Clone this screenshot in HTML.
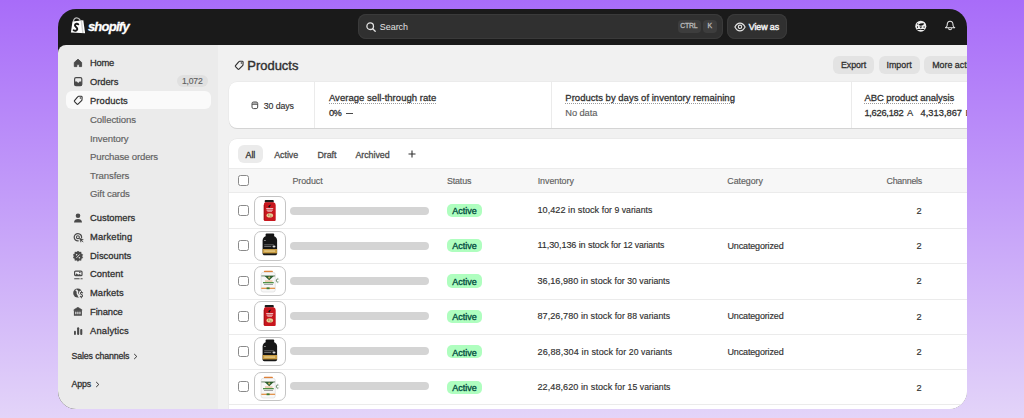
<!DOCTYPE html>
<html><head><meta charset="utf-8"><style>
html,body{margin:0;padding:0;}
body{width:1024px;height:418px;overflow:hidden;position:relative;background:linear-gradient(180deg,#a86cf9 0%,#c49ff9 50%,#e3d4f9 100%);font-family:"Liberation Sans", sans-serif;}
#frame{position:absolute;left:58px;top:9px;width:909px;height:400px;overflow:hidden;border-radius:18px;background:#1a1a1a;}
.t{position:absolute;white-space:nowrap;line-height:1;}
.b{position:absolute;}
</style></head><body><div id="frame">
<svg class="b" style="left:10.00px;top:6.00px;" width="22" height="22" viewBox="0 0 22 22">
<path d="M5.3 6.6 C5.8 3.8 7.6 2.6 9 2.9 C10.6 3.2 11.8 4.4 12.4 5.6" stroke="#b8b8b8" stroke-width="1.3" fill="none"/>
<path d="M4.5 6.6 L15.3 5.3 L17.1 18.2 L2.9 17.6 Z" fill="#fff"/>
<path d="M12.6 5.6 L14 5.45 L15.6 18.1 L14.2 18.05 Z" fill="#d0d0d0"/>
<path d="M10.3 9.3 C9.6 8.6 7.2 8.4 6.9 10.2 C6.6 11.9 9.6 12.2 9.3 14.2 C9 16 6.8 16.1 5.6 15.3" stroke="#1a1a1a" stroke-width="1.9" fill="none" stroke-linecap="round"/>
</svg>
<div class="t" style="left:29.90px;top:11.00px;font-size:13px;font-weight:700;color:#fff;font-style:italic;letter-spacing:-0.75px;-webkit-text-stroke:0.3px #fff;">shopify</div>
<div class="b" style="left:300.00px;top:5.00px;width:365.00px;height:24.50px;background:#303030;border-radius:8px;box-shadow:inset 0 0 0 1px #3a3a3a;"></div>
<svg class="b" style="left:308.00px;top:13.00px;" width="10" height="10" viewBox="0 0 10 10"><circle cx="4.2" cy="4.2" r="3.3" stroke="#e3e3e3" stroke-width="1.3" fill="none"/><path d="M6.7 6.7 L9.2 9.2" stroke="#e3e3e3" stroke-width="1.3" stroke-linecap="round"/></svg>
<div class="t" style="left:321.70px;top:13.62px;font-size:8.96px;font-weight:400;color:#e3e3e3;letter-spacing:0.004px;">Search</div>
<div class="b" style="left:620.00px;top:10.80px;width:23.00px;height:13.00px;background:#3d3d3d;border-radius:4px;"></div>
<div class="t" style="left:622.30px;top:13.56px;font-size:6.9px;font-weight:400;color:#bdbdbd;-webkit-text-stroke:0.28px #bdbdbd;letter-spacing:-0.200px;">CTRL</div>
<div class="b" style="left:645.40px;top:10.80px;width:13.20px;height:13.00px;background:#3d3d3d;border-radius:4px;"></div>
<div class="t" style="left:649.60px;top:13.56px;font-size:6.9px;font-weight:400;color:#bdbdbd;-webkit-text-stroke:0.28px #bdbdbd;">K</div>
<div class="b" style="left:669.20px;top:5.00px;width:59.70px;height:24.50px;background:#303030;border-radius:8px;box-shadow:inset 0 0 0 1px #3a3a3a;"></div>
<svg class="b" style="left:675.60px;top:13.00px;" width="12" height="10" viewBox="0 0 12 10"><path d="M0.9 5 C2.3 2.3 3.9 1.1 6 1.1 C8.1 1.1 9.7 2.3 11.1 5 C9.7 7.7 8.1 8.9 6 8.9 C3.9 8.9 2.3 7.7 0.9 5 Z" stroke="#e3e3e3" stroke-width="1.15" fill="none" stroke-linejoin="round"/><circle cx="6" cy="4.8" r="1.7" stroke="#e3e3e3" stroke-width="1.1" fill="none"/></svg>
<div class="t" style="left:690.75px;top:13.67px;font-size:8.9px;font-weight:400;color:#f0f0f0;-webkit-text-stroke:0.28px #f0f0f0;-webkit-text-stroke:0.45px #f0f0f0;letter-spacing:-0.089px;">View as</div>
<svg class="b" style="left:854.00px;top:9.00px;" width="18" height="18" viewBox="0 0 18 18">
<circle cx="8.8" cy="8.2" r="5.5" fill="#ededed"/>
<path d="M6.4 6.6 Q8.8 5 12.2 5.4 Q11.8 7.3 9 7.7 Q7.2 7.8 6.4 6.6 Z" fill="#111"/>
<circle cx="5.6" cy="5.9" r="0.65" fill="#222"/>
<rect x="5" y="8.3" width="1" height="1.5" fill="#222"/>
<path d="M7.4 8.6 L10.2 8.6 L8.8 10.4 Z" fill="#222"/>
<rect x="11.6" y="8.3" width="1" height="1.5" fill="#222"/>
<path d="M5.2 10.9 L8.1 10.9 L8.8 11.6 L9.5 10.9 L12.4 10.9 L12.2 12 L5.4 12 Z" fill="#1a1a1a"/>
</svg>
<svg class="b" style="left:886.00px;top:11.00px;" width="12" height="12" viewBox="0 0 12 12">
<path d="M6.1 1.3 C4.3 1.3 3.3 2.7 3.2 4.6 L3.1 5.8 C3 6.6 2.5 7 1.5 7.7 L10.7 7.7 C9.7 7 9.2 6.6 9.1 5.8 L9 4.6 C8.9 2.7 7.9 1.3 6.1 1.3 Z" stroke="#e8e8e8" stroke-width="1.05" fill="none" stroke-linejoin="round"/>
<path d="M4.5 8.3 C4.7 10.3 7.5 10.3 7.7 8.3" stroke="#e8e8e8" stroke-width="1.05" fill="none"/>
</svg>
<div class="b" style="left:0.00px;top:36.00px;width:160.00px;height:364.00px;background:#ebebeb;border-top-left-radius:8px;"></div>
<div class="b" style="left:160.00px;top:36.00px;width:749.00px;height:364.00px;background:#f1f1f1;"></div>
<div class="b" style="left:8.00px;top:81.60px;width:144.80px;height:18.40px;background:#fafafa;border-radius:6px;"></div>
<div class="b" style="left:119.00px;top:65.50px;width:30.70px;height:12.80px;background:#e0e0e0;border-radius:7px;"></div>
<div class="t" style="left:123.90px;top:68.42px;font-size:8.6px;font-weight:400;color:#616161;-webkit-text-stroke:0.15px #616161;letter-spacing:-0.163px;">1,072</div>
<div class="t" style="left:32.00px;top:49.24px;font-size:9.4px;font-weight:400;color:#303030;-webkit-text-stroke:0.28px #303030;letter-spacing:-0.254px;">Home</div>
<div class="t" style="left:32.00px;top:67.94px;font-size:9.4px;font-weight:400;color:#303030;-webkit-text-stroke:0.28px #303030;letter-spacing:-0.059px;">Orders</div>
<div class="t" style="left:32.00px;top:86.74px;font-size:9.4px;font-weight:400;color:#303030;-webkit-text-stroke:0.28px #303030;letter-spacing:0.112px;">Products</div>
<div class="t" style="left:32.00px;top:105.67px;font-size:9.6px;font-weight:400;color:#616161;-webkit-text-stroke:0.15px #616161;letter-spacing:-0.094px;">Collections</div>
<div class="t" style="left:32.00px;top:124.57px;font-size:9.6px;font-weight:400;color:#616161;-webkit-text-stroke:0.15px #616161;letter-spacing:-0.108px;">Inventory</div>
<div class="t" style="left:32.00px;top:143.27px;font-size:9.6px;font-weight:400;color:#616161;-webkit-text-stroke:0.15px #616161;letter-spacing:-0.159px;">Purchase orders</div>
<div class="t" style="left:32.00px;top:161.87px;font-size:9.6px;font-weight:400;color:#616161;-webkit-text-stroke:0.15px #616161;letter-spacing:-0.108px;">Transfers</div>
<div class="t" style="left:32.00px;top:180.47px;font-size:9.6px;font-weight:400;color:#616161;-webkit-text-stroke:0.15px #616161;letter-spacing:-0.126px;">Gift cards</div>
<div class="t" style="left:32.00px;top:204.24px;font-size:9.4px;font-weight:400;color:#303030;-webkit-text-stroke:0.28px #303030;letter-spacing:-0.014px;">Customers</div>
<div class="t" style="left:32.00px;top:222.94px;font-size:9.4px;font-weight:400;color:#303030;-webkit-text-stroke:0.28px #303030;letter-spacing:0.125px;">Marketing</div>
<div class="t" style="left:32.00px;top:241.84px;font-size:9.4px;font-weight:400;color:#303030;-webkit-text-stroke:0.28px #303030;letter-spacing:0.014px;">Discounts</div>
<div class="t" style="left:32.00px;top:260.24px;font-size:9.4px;font-weight:400;color:#303030;-webkit-text-stroke:0.28px #303030;letter-spacing:0.037px;">Content</div>
<div class="t" style="left:32.00px;top:279.24px;font-size:9.4px;font-weight:400;color:#303030;-webkit-text-stroke:0.28px #303030;letter-spacing:0.051px;">Markets</div>
<div class="t" style="left:32.00px;top:297.94px;font-size:9.4px;font-weight:400;color:#303030;-webkit-text-stroke:0.28px #303030;letter-spacing:-0.094px;">Finance</div>
<div class="t" style="left:32.00px;top:316.84px;font-size:9.4px;font-weight:400;color:#303030;-webkit-text-stroke:0.28px #303030;letter-spacing:0.154px;">Analytics</div>
<div class="t" style="left:13.50px;top:343.05px;font-size:8.8px;font-weight:400;color:#303030;-webkit-text-stroke:0.28px #303030;letter-spacing:-0.134px;">Sales channels</div>
<div class="t" style="left:13.50px;top:371.45px;font-size:8.8px;font-weight:400;color:#303030;-webkit-text-stroke:0.28px #303030;letter-spacing:-0.141px;">Apps</div>
<svg class="b" style="left:74.50px;top:343.50px;" width="5" height="7" viewBox="0 0 5 7"><path d="M1.2 1 L3.8 3.5 L1.2 6" stroke="#303030" stroke-width="1" fill="none"/></svg>
<svg class="b" style="left:36.50px;top:371.80px;" width="5" height="7" viewBox="0 0 5 7"><path d="M1.2 1 L3.8 3.5 L1.2 6" stroke="#303030" stroke-width="1" fill="none"/></svg>
<svg class="b" style="left:15.00px;top:48.50px;" width="11" height="11" viewBox="0 0 11 11"><path d="M5 1.2 L8.6 4.4 L8.6 8.6 L6.3 8.6 L6.3 6.3 L3.9 6.3 L3.9 8.6 L1.3 8.6 L1.3 4.4 Z" fill="#4a4a4a" stroke="#4a4a4a" stroke-width="0.9" stroke-linejoin="round"/></svg>
<svg class="b" style="left:15.00px;top:67.00px;" width="11" height="11" viewBox="0 0 11 11"><rect x="1.6" y="1.6" width="7.2" height="8" rx="1.4" fill="none" stroke="#4a4a4a" stroke-width="1.2"/><path d="M1.6 5.6 L3.9 5.6 L5.2 7 L6.6 5.6 L8.8 5.6 L8.8 8.4 Q8.8 9.6 7.6 9.6 L2.8 9.6 Q1.6 9.6 1.6 8.4 Z" fill="#4a4a4a"/></svg>
<svg class="b" style="left:15.00px;top:85.80px;" width="11" height="11" viewBox="0 0 11 11"><path d="M1.5 5.6 L4.9 1.6 Q5.2 1.2 5.7 1.2 L8.4 1.3 Q9.1 1.4 9.1 2.1 L9 4.8 Q9 5.3 8.6 5.6 L5 9.2 Q4.5 9.7 4 9.2 L1.5 6.6 Q1.1 6.1 1.5 5.6 Z" fill="none" stroke="#303030" stroke-width="1.1" stroke-linejoin="round"/><circle cx="7.4" cy="3.1" r="0.75" fill="#303030"/></svg>
<svg class="b" style="left:15.00px;top:204.00px;" width="11" height="11" viewBox="0 0 11 11"><circle cx="5" cy="2.8" r="2.3" fill="#4a4a4a"/><path d="M1 9.6 C1 7 2.8 6 5 6 C7.2 6 9 7 9 9.6 Z" fill="#4a4a4a"/></svg>
<svg class="b" style="left:15.00px;top:223.00px;" width="11" height="11" viewBox="0 0 11 11"><path d="M8.59 5.52 A3.7 3.7 0 1 0 5.22 8.89" stroke="#4a4a4a" stroke-width="1.25" fill="none" stroke-linecap="round"/><circle cx="4.9" cy="5.2" r="1.45" stroke="#4a4a4a" stroke-width="1.15" fill="none"/><path d="M6.4 6.1 L10.4 7.6 L8.5 8.4 L7.8 10.3 Z" fill="#4a4a4a" stroke="#4a4a4a" stroke-width="0.4" stroke-linejoin="round"/><path d="M8.4 8.3 L10 9.9" stroke="#4a4a4a" stroke-width="0.9" stroke-linecap="round"/></svg>
<svg class="b" style="left:15.00px;top:241.50px;" width="11" height="11" viewBox="0 0 11 11"><path d="M5 -0.2 L6.3 1.1 L8.1 0.9 L8.3 2.7 L9.9 3.6 L9.1 5.2 L9.9 6.8 L8.3 7.7 L8.1 9.5 L6.3 9.3 L5 10.6 L3.7 9.3 L1.9 9.5 L1.7 7.7 L0.1 6.8 L0.9 5.2 L0.1 3.6 L1.7 2.7 L1.9 0.9 L3.7 1.1 Z" fill="#4a4a4a" stroke="#4a4a4a" stroke-width="0.3" stroke-linejoin="round"/><path d="M3.4 6.9 L6.6 3.5" stroke="#ebebeb" stroke-width="0.9"/><circle cx="3.6" cy="3.7" r="0.75" fill="#ebebeb"/><circle cx="6.4" cy="6.7" r="0.75" fill="#ebebeb"/></svg>
<svg class="b" style="left:15.00px;top:260.50px;" width="11" height="11" viewBox="0 0 11 11"><rect x="1.6" y="1.1" width="7.4" height="4.6" rx="1" fill="#f2f2f2" stroke="#4a4a4a" stroke-width="1.2"/><path d="M2.1 5.3 L3.6 3.3 L5.2 4.8 L6.5 3.9 L8.5 5.3 Z" fill="#4a4a4a"/><circle cx="6.8" cy="2.6" r="0.75" fill="#4a4a4a"/><rect x="1.1" y="8.3" width="5.6" height="1" rx="0.4" fill="#4a4a4a"/><rect x="7.4" y="8.3" width="2.3" height="1" rx="0.4" fill="#4a4a4a"/></svg>
<svg class="b" style="left:15.00px;top:279.00px;" width="11" height="11" viewBox="0 0 11 11"><circle cx="4.7" cy="5" r="4.5" fill="#4a4a4a"/><path d="M3.2 2.2 Q4.2 2.6 4.6 3.8 Q4.2 4.8 4.4 5.6 Q5.4 6.6 5.6 8.2" stroke="#ebebeb" stroke-width="1.5" fill="none" stroke-linecap="round"/><path d="M9.6 4.9 Q9.1 4.2 8.4 4.2 Q7.4 4.3 7.5 5.3 Q7.6 6.2 8.5 6.5 Q9.6 6.9 9.5 7.9 Q9.4 8.9 8.4 8.9 Q7.6 8.9 7.3 8.2" stroke="#ebebeb" stroke-width="3.2" fill="none" stroke-linecap="round"/><path d="M9.6 4.9 Q9.1 4.2 8.4 4.2 Q7.4 4.3 7.5 5.3 Q7.6 6.2 8.5 6.5 Q9.6 6.9 9.5 7.9 Q9.4 8.9 8.4 8.9 Q7.6 8.9 7.3 8.2 M8.5 3.5 L8.5 4.2 M8.4 8.9 L8.4 9.7" stroke="#4a4a4a" stroke-width="1.1" fill="none" stroke-linecap="round"/></svg>
<svg class="b" style="left:15.00px;top:297.80px;" width="11" height="11" viewBox="0 0 11 11"><path d="M4.9 0.3 L8.9 2.7 L8.9 3.4 L0.9 3.4 L0.9 2.7 Z" fill="#4a4a4a" stroke="#4a4a4a" stroke-width="0.6" stroke-linejoin="round"/><rect x="0.9" y="3.2" width="8" height="5.6" rx="0.3" fill="#4a4a4a"/><rect x="2.3" y="4.5" width="1.1" height="2.7" rx="0.55" fill="#f2f2f2"/><rect x="4.35" y="4.5" width="1.1" height="2.7" rx="0.55" fill="#f2f2f2"/><rect x="6.4" y="4.5" width="1.1" height="2.7" rx="0.55" fill="#f2f2f2"/></svg>
<svg class="b" style="left:15.00px;top:316.50px;" width="11" height="11" viewBox="0 0 11 11"><rect x="1" y="4.8" width="1.9" height="4.2" rx="0.9" fill="#4a4a4a"/><rect x="4.1" y="1.3" width="2.1" height="7.7" rx="1" fill="#4a4a4a"/><rect x="7.2" y="3.1" width="2.1" height="5.9" rx="1" fill="#4a4a4a"/></svg>
<svg class="b" style="left:175.50px;top:50.80px;" width="11" height="11" viewBox="0 0 11 11"><path d="M1.5 5.6 L4.9 1.6 Q5.2 1.2 5.7 1.2 L8.4 1.3 Q9.1 1.4 9.1 2.1 L9 4.8 Q9 5.3 8.6 5.6 L5 9.2 Q4.5 9.7 4 9.2 L1.5 6.6 Q1.1 6.1 1.5 5.6 Z" fill="none" stroke="#303030" stroke-width="1.15" stroke-linejoin="round"/><circle cx="7.4" cy="3.1" r="0.75" fill="#303030"/></svg>
<div class="t" style="left:189.30px;top:50.54px;font-size:12.95px;font-weight:400;color:#303030;-webkit-text-stroke:0.28px #303030;-webkit-text-stroke:0.4px #303030;letter-spacing:0.005px;">Products</div>
<div class="b" style="left:775.30px;top:47.00px;width:40.60px;height:18.20px;background:#e3e3e3;border-radius:6px;"></div>
<div class="t" style="left:783.00px;top:52.27px;font-size:8.9px;font-weight:400;color:#303030;-webkit-text-stroke:0.28px #303030;letter-spacing:-0.109px;">Export</div>
<div class="b" style="left:821.00px;top:47.00px;width:40.70px;height:18.20px;background:#e3e3e3;border-radius:6px;"></div>
<div class="t" style="left:828.40px;top:52.27px;font-size:8.9px;font-weight:400;color:#303030;-webkit-text-stroke:0.28px #303030;letter-spacing:0.057px;">Import</div>
<div class="b" style="left:866.40px;top:47.00px;width:80.00px;height:18.20px;background:#e3e3e3;border-radius:6px;"></div>
<div class="t" style="left:874.20px;top:52.27px;font-size:8.9px;font-weight:400;color:#303030;-webkit-text-stroke:0.28px #303030;">More actions</div>
<div class="b" style="left:171.00px;top:73.00px;width:760.00px;height:46.30px;background:#fff;border-radius:8px;box-shadow:0 1px 0 #d4d4d4, 0 0 0 0.5px #e6e6e6;"></div>
<div class="b" style="left:256.00px;top:73.00px;width:1.00px;height:46.30px;background:#ebebeb;"></div>
<div class="b" style="left:493.00px;top:73.00px;width:1.00px;height:46.30px;background:#ebebeb;"></div>
<div class="b" style="left:792.50px;top:73.00px;width:1.00px;height:46.30px;background:#ebebeb;"></div>
<svg class="b" style="left:193.40px;top:91.50px;" width="8" height="9" viewBox="0 0 8 9"><rect x="1.4" y="1.3" width="4.9" height="2" fill="#bdbdbd"/><rect x="1" y="1" width="5.7" height="6.6" rx="1.5" stroke="#4a4a4a" stroke-width="1" fill="none"/><path d="M1 3.3 L6.7 3.3" stroke="#4a4a4a" stroke-width="0.9"/></svg>
<div class="t" style="left:205.75px;top:92.55px;font-size:8.8px;font-weight:400;color:#303030;-webkit-text-stroke:0.15px #303030;letter-spacing:-0.116px;">30 days</div>
<div class="t" style="left:270.90px;top:84.46px;font-size:9.5px;font-weight:400;color:#303030;-webkit-text-stroke:0.28px #303030;letter-spacing:0.036px;">Average sell-through rate</div>
<div class="b" style="left:270.90px;top:94.00px;width:107.40px;height:1.00px;background-image:linear-gradient(90deg,#9a9a9a 50%,transparent 50%);background-size:2px 1px;"></div>
<div class="t" style="left:270.90px;top:99.93px;font-size:9.3px;font-weight:400;color:#303030;-webkit-text-stroke:0.28px #303030;letter-spacing:-0.669px;">0%</div>
<div class="b" style="left:288.00px;top:103.80px;width:7.00px;height:1.00px;background:#4a4a4a;"></div>
<div class="t" style="left:507.30px;top:84.46px;font-size:9.5px;font-weight:400;color:#303030;-webkit-text-stroke:0.28px #303030;letter-spacing:0.018px;">Products by days of inventory remaining</div>
<div class="b" style="left:507.30px;top:94.00px;width:169.70px;height:1.00px;background-image:linear-gradient(90deg,#9a9a9a 50%,transparent 50%);background-size:2px 1px;"></div>
<div class="t" style="left:507.30px;top:100.43px;font-size:9.3px;font-weight:400;color:#616161;-webkit-text-stroke:0.15px #616161;letter-spacing:-0.080px;">No data</div>
<div class="t" style="left:806.40px;top:84.46px;font-size:9.5px;font-weight:400;color:#303030;-webkit-text-stroke:0.28px #303030;letter-spacing:-0.051px;">ABC product analysis</div>
<div class="b" style="left:806.40px;top:94.00px;width:89.80px;height:1.00px;background-image:linear-gradient(90deg,#9a9a9a 50%,transparent 50%);background-size:2px 1px;"></div>
<div class="t" style="left:806.40px;top:99.83px;font-size:9.3px;font-weight:400;color:#303030;-webkit-text-stroke:0.28px #303030;letter-spacing:-0.262px;">1,626,182</div>
<div class="t" style="left:849.00px;top:99.83px;font-size:9.3px;font-weight:400;color:#303030;-webkit-text-stroke:0.15px #303030;">A</div>
<div class="t" style="left:862.60px;top:99.83px;font-size:9.3px;font-weight:400;color:#303030;-webkit-text-stroke:0.28px #303030;letter-spacing:0.005px;">4,313,867</div>
<div class="t" style="left:907.50px;top:99.83px;font-size:9.3px;font-weight:400;color:#303030;-webkit-text-stroke:0.15px #303030;">B</div>
<div class="b" style="left:171.30px;top:129.50px;width:760.00px;height:290.00px;background:#fff;border-radius:8px;box-shadow:0 0 0 0.5px #e3e3e3;"></div>
<div class="b" style="left:179.70px;top:135.80px;width:25.00px;height:18.00px;background:#ebebeb;border-radius:6px;"></div>
<div class="t" style="left:187.50px;top:141.97px;font-size:8.9px;font-weight:400;color:#303030;-webkit-text-stroke:0.28px #303030;letter-spacing:-0.025px;">All</div>
<div class="t" style="left:216.20px;top:141.97px;font-size:8.9px;font-weight:400;color:#4a4a4a;-webkit-text-stroke:0.28px #4a4a4a;letter-spacing:-0.029px;">Active</div>
<div class="t" style="left:259.40px;top:141.97px;font-size:8.9px;font-weight:400;color:#4a4a4a;-webkit-text-stroke:0.28px #4a4a4a;letter-spacing:-0.047px;">Draft</div>
<div class="t" style="left:297.50px;top:141.97px;font-size:8.9px;font-weight:400;color:#4a4a4a;-webkit-text-stroke:0.28px #4a4a4a;letter-spacing:-0.066px;">Archived</div>
<svg class="b" style="left:349.50px;top:141.00px;" width="8" height="8" viewBox="0 0 8 8"><path d="M4 0.5 L4 7.5 M0.5 4 L7.5 4" stroke="#303030" stroke-width="1.1"/></svg>
<div class="b" style="left:171.30px;top:158.80px;width:760.00px;height:24.80px;background:#f7f7f7;border-top:1px solid #ebebeb;border-bottom:1px solid #ebebeb;box-sizing:border-box;"></div>
<div class="b" style="left:180.20px;top:166.00px;width:10.60px;height:10.60px;border:1px solid #8a8a8a;border-radius:2.5px;box-sizing:border-box;background:#fff;"></div>
<div class="t" style="left:234.40px;top:168.07px;font-size:8.9px;font-weight:400;color:#616161;-webkit-text-stroke:0.15px #616161;letter-spacing:-0.042px;">Product</div>
<div class="t" style="left:388.90px;top:168.17px;font-size:8.9px;font-weight:400;color:#616161;-webkit-text-stroke:0.15px #616161;letter-spacing:-0.129px;">Status</div>
<div class="t" style="left:479.70px;top:168.17px;font-size:8.9px;font-weight:400;color:#616161;-webkit-text-stroke:0.15px #616161;letter-spacing:-0.046px;">Inventory</div>
<div class="t" style="left:669.30px;top:168.17px;font-size:8.9px;font-weight:400;color:#616161;-webkit-text-stroke:0.15px #616161;letter-spacing:-0.052px;">Category</div>
<div class="t" style="left:828.50px;top:168.17px;font-size:8.9px;font-weight:400;color:#616161;-webkit-text-stroke:0.15px #616161;letter-spacing:-0.250px;">Channels</div>
<div class="b" style="left:171.30px;top:219.00px;width:760.00px;height:1.00px;background:#ebebeb;"></div>
<div class="b" style="left:180.20px;top:196.20px;width:10.60px;height:10.60px;border:1px solid #8a8a8a;border-radius:2.5px;box-sizing:border-box;background:#fff;"></div>
<div class="b" style="left:196.10px;top:187.10px;width:31.80px;height:29.50px;border:1px solid #c4c4c4;border-radius:7px;box-sizing:border-box;background:#fff;"></div>
<svg class="b" style="left:196.10px;top:187.10px;" width="31.8" height="30" viewBox="0 0 31.8 30"><rect x="10.7" y="4" width="9.1" height="2.6" rx="1" fill="#1c1c1c"/><path d="M11 6.3 L19.6 6.3 Q21.7 6.8 21.7 9 L21.7 24 Q21.7 25.1 20.6 25.1 L10.9 25.1 Q9.8 25.1 9.8 24 L9.8 9 Q9.8 6.8 11 6.3 Z" fill="#c8161d"/><rect x="9.8" y="9" width="0.9" height="15" fill="#9e1015"/><path d="M14.2 10.2 Q15.6 8.6 17.4 8.6 Q16.2 9.6 15.6 11.4 Q14.8 11.6 14.2 10.2 Z" fill="#151515"/><rect x="12.2" y="12.2" width="7" height="0.9" fill="#f6dede"/><rect x="12.6" y="13.7" width="6.2" height="0.9" fill="#f6dede"/><rect x="13.4" y="15.2" width="4.6" height="0.7" fill="#eab8b8"/><ellipse cx="15.8" cy="19.4" rx="3.3" ry="2.1" fill="#e6cf94"/><circle cx="14.8" cy="19" r="0.55" fill="#5a3518"/><circle cx="16.9" cy="19.9" r="0.5" fill="#5a3518"/></svg>
<div class="b" style="left:232.20px;top:197.90px;width:138.80px;height:8.10px;background:#d4d4d4;border-radius:4.05px;"></div>
<div class="b" style="left:388.90px;top:194.70px;width:34.70px;height:13.10px;background:#affebf;border-radius:5px;"></div>
<div class="t" style="left:394.30px;top:197.98px;font-size:9.0px;font-weight:400;color:#014b40;-webkit-text-stroke:0.28px #014b40;-webkit-text-stroke:0.33px #014b40;letter-spacing:-0.003px;">Active</div>
<div class="t" style="left:479.50px;top:197.10px;font-size:9.1px;font-weight:400;color:#303030;-webkit-text-stroke:0.15px #303030;letter-spacing:0.035px;">10,422 in stock <span style="font-size:8.67px">for 9 variants</span></div>
<div class="t" style="left:858.40px;top:197.71px;font-size:9.2px;font-weight:400;color:#303030;-webkit-text-stroke:0.15px #303030;">2</div>
<div class="b" style="left:171.30px;top:254.25px;width:760.00px;height:1.00px;background:#ebebeb;"></div>
<div class="b" style="left:180.20px;top:231.45px;width:10.60px;height:10.60px;border:1px solid #8a8a8a;border-radius:2.5px;box-sizing:border-box;background:#fff;"></div>
<div class="b" style="left:196.10px;top:222.20px;width:31.80px;height:29.50px;border:1px solid #c4c4c4;border-radius:7px;box-sizing:border-box;background:#fff;"></div>
<svg class="b" style="left:196.10px;top:222.20px;" width="31.8" height="30" viewBox="0 0 31.8 30"><rect x="11.6" y="2.4" width="8.6" height="3" rx="1" fill="#141414"/><path d="M12 5 L19.8 5 Q23 6.2 23.1 9.6 L23.1 22.6 Q23.1 24.2 21.4 24.2 L10.3 24.2 Q8.6 24.2 8.6 22.6 L8.6 9.6 Q8.7 6.2 12 5 Z" fill="#161616"/><rect x="10" y="9" width="1.8" height="0.7" fill="#bbb"/><rect x="10.2" y="13.2" width="9.6" height="1.1" fill="#5a5a5a"/><rect x="10.2" y="15.1" width="7" height="0.9" fill="#777"/><ellipse cx="20" cy="15.5" rx="1.5" ry="0.9" fill="#ddd"/><rect x="8.6" y="18" width="14.5" height="4.4" fill="#c6993f"/><rect x="10.2" y="19.4" width="11" height="1.3" fill="#e8cf8e"/></svg>
<div class="b" style="left:232.20px;top:233.00px;width:138.80px;height:8.10px;background:#d4d4d4;border-radius:4.05px;"></div>
<div class="b" style="left:388.90px;top:230.08px;width:34.70px;height:13.10px;background:#affebf;border-radius:5px;"></div>
<div class="t" style="left:394.30px;top:233.36px;font-size:9.0px;font-weight:400;color:#014b40;-webkit-text-stroke:0.28px #014b40;-webkit-text-stroke:0.33px #014b40;letter-spacing:-0.003px;">Active</div>
<div class="t" style="left:479.50px;top:232.48px;font-size:9.1px;font-weight:400;color:#303030;-webkit-text-stroke:0.15px #303030;letter-spacing:-0.110px;">11,30,136 in stock <span style="font-size:8.67px">for 12 variants</span></div>
<div class="t" style="left:669.50px;top:232.56px;font-size:9.0px;font-weight:400;color:#303030;-webkit-text-stroke:0.15px #303030;letter-spacing:-0.157px;">Uncategorized</div>
<div class="t" style="left:858.40px;top:233.09px;font-size:9.2px;font-weight:400;color:#303030;-webkit-text-stroke:0.15px #303030;">2</div>
<div class="b" style="left:171.30px;top:289.50px;width:760.00px;height:1.00px;background:#ebebeb;"></div>
<div class="b" style="left:180.20px;top:266.70px;width:10.60px;height:10.60px;border:1px solid #8a8a8a;border-radius:2.5px;box-sizing:border-box;background:#fff;"></div>
<div class="b" style="left:196.10px;top:257.30px;width:31.80px;height:29.50px;border:1px solid #c4c4c4;border-radius:7px;box-sizing:border-box;background:#fff;"></div>
<svg class="b" style="left:196.10px;top:257.30px;" width="31.8" height="30" viewBox="0 0 31.8 30"><rect x="9.9" y="4.7" width="9" height="1.7" rx="0.7" fill="#df7a2c"/><rect x="7.1" y="6.3" width="14.2" height="19.7" rx="2.2" fill="#f7f7f7" stroke="#d0d0d0" stroke-width="0.5"/><rect x="7.3" y="9.6" width="13.8" height="0.7" fill="#345a34"/><path d="M10.6 9.9 L19.8 9.9 L15.2 14.2 Z" fill="#2b5e2c"/><circle cx="15.2" cy="11.5" r="1.1" fill="#c9b36a"/><rect x="11" y="14.6" width="7.5" height="0.9" fill="#e3a36a"/><rect x="9" y="16" width="10.7" height="1.3" fill="#4f8f45"/><rect x="10" y="18.1" width="9" height="0.9" fill="#9a9a9a"/><rect x="7.3" y="21.7" width="13.8" height="1.2" fill="#e08a3c"/><rect x="12.6" y="21.4" width="3" height="1.8" fill="#3d7f33"/><ellipse cx="23.5" cy="14.5" rx="1.8" ry="2.7" fill="#fff" stroke="#d8d8d8" stroke-width="0.4"/><path d="M24.3 13.1 C22.9 12.7 22.3 13.7 22.4 14.7 C22.5 15.9 23.5 16.3 24.3 15.9" stroke="#2b5e2c" stroke-width="0.8" fill="none"/></svg>
<div class="b" style="left:232.20px;top:268.10px;width:138.80px;height:8.10px;background:#d4d4d4;border-radius:4.05px;"></div>
<div class="b" style="left:388.90px;top:265.46px;width:34.70px;height:13.10px;background:#affebf;border-radius:5px;"></div>
<div class="t" style="left:394.30px;top:268.74px;font-size:9.0px;font-weight:400;color:#014b40;-webkit-text-stroke:0.28px #014b40;-webkit-text-stroke:0.33px #014b40;letter-spacing:-0.003px;">Active</div>
<div class="t" style="left:479.50px;top:267.86px;font-size:9.1px;font-weight:400;color:#303030;-webkit-text-stroke:0.15px #303030;letter-spacing:0.035px;">36,16,980 in stock <span style="font-size:8.67px">for 30 variants</span></div>
<div class="t" style="left:858.40px;top:268.47px;font-size:9.2px;font-weight:400;color:#303030;-webkit-text-stroke:0.15px #303030;">2</div>
<div class="b" style="left:171.30px;top:324.75px;width:760.00px;height:1.00px;background:#ebebeb;"></div>
<div class="b" style="left:180.20px;top:301.95px;width:10.60px;height:10.60px;border:1px solid #8a8a8a;border-radius:2.5px;box-sizing:border-box;background:#fff;"></div>
<div class="b" style="left:196.10px;top:292.40px;width:31.80px;height:29.50px;border:1px solid #c4c4c4;border-radius:7px;box-sizing:border-box;background:#fff;"></div>
<svg class="b" style="left:196.10px;top:292.40px;" width="31.8" height="30" viewBox="0 0 31.8 30"><rect x="10.7" y="4" width="9.1" height="2.6" rx="1" fill="#1c1c1c"/><path d="M11 6.3 L19.6 6.3 Q21.7 6.8 21.7 9 L21.7 24 Q21.7 25.1 20.6 25.1 L10.9 25.1 Q9.8 25.1 9.8 24 L9.8 9 Q9.8 6.8 11 6.3 Z" fill="#c8161d"/><rect x="9.8" y="9" width="0.9" height="15" fill="#9e1015"/><path d="M14.2 10.2 Q15.6 8.6 17.4 8.6 Q16.2 9.6 15.6 11.4 Q14.8 11.6 14.2 10.2 Z" fill="#151515"/><rect x="12.2" y="12.2" width="7" height="0.9" fill="#f6dede"/><rect x="12.6" y="13.7" width="6.2" height="0.9" fill="#f6dede"/><rect x="13.4" y="15.2" width="4.6" height="0.7" fill="#eab8b8"/><ellipse cx="15.8" cy="19.4" rx="3.3" ry="2.1" fill="#e6cf94"/><circle cx="14.8" cy="19" r="0.55" fill="#5a3518"/><circle cx="16.9" cy="19.9" r="0.5" fill="#5a3518"/></svg>
<div class="b" style="left:232.20px;top:303.20px;width:138.80px;height:8.10px;background:#d4d4d4;border-radius:4.05px;"></div>
<div class="b" style="left:388.90px;top:300.84px;width:34.70px;height:13.10px;background:#affebf;border-radius:5px;"></div>
<div class="t" style="left:394.30px;top:304.12px;font-size:9.0px;font-weight:400;color:#014b40;-webkit-text-stroke:0.28px #014b40;-webkit-text-stroke:0.33px #014b40;letter-spacing:-0.003px;">Active</div>
<div class="t" style="left:479.50px;top:303.24px;font-size:9.1px;font-weight:400;color:#303030;-webkit-text-stroke:0.15px #303030;letter-spacing:0.041px;">87,26,780 in stock <span style="font-size:8.67px">for 88 variants</span></div>
<div class="t" style="left:669.50px;top:303.32px;font-size:9.0px;font-weight:400;color:#303030;-webkit-text-stroke:0.15px #303030;letter-spacing:-0.157px;">Uncategorized</div>
<div class="t" style="left:858.40px;top:303.85px;font-size:9.2px;font-weight:400;color:#303030;-webkit-text-stroke:0.15px #303030;">2</div>
<div class="b" style="left:171.30px;top:360.00px;width:760.00px;height:1.00px;background:#ebebeb;"></div>
<div class="b" style="left:180.20px;top:337.20px;width:10.60px;height:10.60px;border:1px solid #8a8a8a;border-radius:2.5px;box-sizing:border-box;background:#fff;"></div>
<div class="b" style="left:196.10px;top:327.50px;width:31.80px;height:29.50px;border:1px solid #c4c4c4;border-radius:7px;box-sizing:border-box;background:#fff;"></div>
<svg class="b" style="left:196.10px;top:327.50px;" width="31.8" height="30" viewBox="0 0 31.8 30"><rect x="11.6" y="2.4" width="8.6" height="3" rx="1" fill="#141414"/><path d="M12 5 L19.8 5 Q23 6.2 23.1 9.6 L23.1 22.6 Q23.1 24.2 21.4 24.2 L10.3 24.2 Q8.6 24.2 8.6 22.6 L8.6 9.6 Q8.7 6.2 12 5 Z" fill="#161616"/><rect x="10" y="9" width="1.8" height="0.7" fill="#bbb"/><rect x="10.2" y="13.2" width="9.6" height="1.1" fill="#5a5a5a"/><rect x="10.2" y="15.1" width="7" height="0.9" fill="#777"/><ellipse cx="20" cy="15.5" rx="1.5" ry="0.9" fill="#ddd"/><rect x="8.6" y="18" width="14.5" height="4.4" fill="#c6993f"/><rect x="10.2" y="19.4" width="11" height="1.3" fill="#e8cf8e"/></svg>
<div class="b" style="left:232.20px;top:338.30px;width:138.80px;height:8.10px;background:#d4d4d4;border-radius:4.05px;"></div>
<div class="b" style="left:388.90px;top:336.22px;width:34.70px;height:13.10px;background:#affebf;border-radius:5px;"></div>
<div class="t" style="left:394.30px;top:339.50px;font-size:9.0px;font-weight:400;color:#014b40;-webkit-text-stroke:0.28px #014b40;-webkit-text-stroke:0.33px #014b40;letter-spacing:-0.003px;">Active</div>
<div class="t" style="left:479.50px;top:338.62px;font-size:9.1px;font-weight:400;color:#303030;-webkit-text-stroke:0.15px #303030;letter-spacing:0.103px;">26,88,304 in stock <span style="font-size:8.67px">for 20 variants</span></div>
<div class="t" style="left:669.50px;top:338.70px;font-size:9.0px;font-weight:400;color:#303030;-webkit-text-stroke:0.15px #303030;letter-spacing:-0.157px;">Uncategorized</div>
<div class="t" style="left:858.40px;top:339.23px;font-size:9.2px;font-weight:400;color:#303030;-webkit-text-stroke:0.15px #303030;">2</div>
<div class="b" style="left:171.30px;top:395.25px;width:760.00px;height:1.00px;background:#ebebeb;"></div>
<div class="b" style="left:180.20px;top:372.45px;width:10.60px;height:10.60px;border:1px solid #8a8a8a;border-radius:2.5px;box-sizing:border-box;background:#fff;"></div>
<div class="b" style="left:196.10px;top:362.60px;width:31.80px;height:29.50px;border:1px solid #c4c4c4;border-radius:7px;box-sizing:border-box;background:#fff;"></div>
<svg class="b" style="left:196.10px;top:362.60px;" width="31.8" height="30" viewBox="0 0 31.8 30"><rect x="9.9" y="4.7" width="9" height="1.7" rx="0.7" fill="#df7a2c"/><rect x="7.1" y="6.3" width="14.2" height="19.7" rx="2.2" fill="#f7f7f7" stroke="#d0d0d0" stroke-width="0.5"/><rect x="7.3" y="9.6" width="13.8" height="0.7" fill="#345a34"/><path d="M10.6 9.9 L19.8 9.9 L15.2 14.2 Z" fill="#2b5e2c"/><circle cx="15.2" cy="11.5" r="1.1" fill="#c9b36a"/><rect x="11" y="14.6" width="7.5" height="0.9" fill="#e3a36a"/><rect x="9" y="16" width="10.7" height="1.3" fill="#4f8f45"/><rect x="10" y="18.1" width="9" height="0.9" fill="#9a9a9a"/><rect x="7.3" y="21.7" width="13.8" height="1.2" fill="#e08a3c"/><rect x="12.6" y="21.4" width="3" height="1.8" fill="#3d7f33"/><ellipse cx="23.5" cy="14.5" rx="1.8" ry="2.7" fill="#fff" stroke="#d8d8d8" stroke-width="0.4"/><path d="M24.3 13.1 C22.9 12.7 22.3 13.7 22.4 14.7 C22.5 15.9 23.5 16.3 24.3 15.9" stroke="#2b5e2c" stroke-width="0.8" fill="none"/></svg>
<div class="b" style="left:232.20px;top:373.40px;width:138.80px;height:8.10px;background:#d4d4d4;border-radius:4.05px;"></div>
<div class="b" style="left:388.90px;top:371.60px;width:34.70px;height:13.10px;background:#affebf;border-radius:5px;"></div>
<div class="t" style="left:394.30px;top:374.88px;font-size:9.0px;font-weight:400;color:#014b40;-webkit-text-stroke:0.28px #014b40;-webkit-text-stroke:0.33px #014b40;letter-spacing:-0.003px;">Active</div>
<div class="t" style="left:479.50px;top:374.00px;font-size:9.1px;font-weight:400;color:#303030;-webkit-text-stroke:0.15px #303030;letter-spacing:0.053px;">22,48,620 in stock <span style="font-size:8.67px">for 15 variants</span></div>
<div class="t" style="left:858.40px;top:374.61px;font-size:9.2px;font-weight:400;color:#303030;-webkit-text-stroke:0.15px #303030;">2</div>
</div></body></html>
